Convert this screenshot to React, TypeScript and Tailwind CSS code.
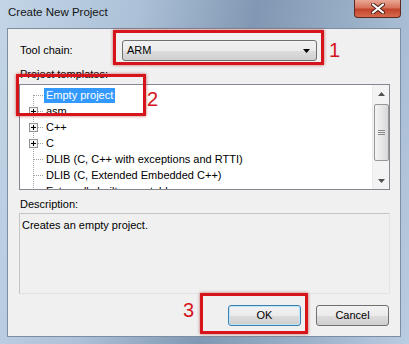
import React from "react";

const font = { fontFamily: '"Liberation Sans", Arial, sans-serif' };

function Gutter({ first, plus }: { first?: boolean; plus?: boolean }) {
  return (
    <svg width="24" height="16" className="shrink-0">
      <line x1="13.5" y1={first ? 8 : 0} x2="13.5" y2="16" stroke="#a0a0a0" strokeDasharray="1 1" />
      <line x1="14" y1="8.5" x2="24" y2="8.5" stroke="#a0a0a0" strokeDasharray="1 1" />
      {plus && (
        <g>
          <rect x="9.5" y="4.5" width="8" height="8" fill="#f4f4f4" stroke="#919191" />
          <line x1="11" y1="8.5" x2="16" y2="8.5" stroke="#000" />
          <line x1="13.5" y1="6" x2="13.5" y2="11" stroke="#000" />
        </g>
      )}
    </svg>
  );
}

function Row({ label, first, plus, selected }: { label: string; first?: boolean; plus?: boolean; selected?: boolean }) {
  return (
    <div className="flex h-[16px] items-center whitespace-nowrap">
      <Gutter first={first} plus={plus} />
      <span
        className={
          selected
            ? "bg-[#3399ff] text-white px-[2px] leading-[15px]"
            : "px-[2px] leading-[15px] text-black"
        }
      >
        {label}
      </span>
    </div>
  );
}

export default function App() {
  return (
    <div
      className="relative w-[409px] h-[344px] overflow-hidden flex flex-col pt-[28px] pl-[7px] pr-[8px] pb-[7px] bg-[linear-gradient(100deg,#c3d5e7_0%,#acc1d7_30%,#8098b3_55%,#97aec6_75%,#b9cde1_100%)] text-[11px]"
      style={font}
    >
      {/* title */}
      <div className="absolute left-[8px] top-[5px] text-[11.5px] leading-[14px] text-[#141414]">Create New Project</div>
      {/* close button */}
      <div className="absolute left-[354px] top-0 w-[47px] h-[18px] rounded-b-[4px] border border-t-0 border-[#5c2a22] bg-[linear-gradient(180deg,#e9a896_0%,#d7735c_45%,#c2432b_55%,#d66a4e_100%)] flex items-center justify-center">
        <svg width="14" height="11" viewBox="0 0 14 11">
          <path d="M2 1.5 L12 9.5 M12 1.5 L2 9.5" stroke="#4a2018" strokeWidth="4" strokeLinecap="round" />
          <path d="M2 1.5 L12 9.5 M12 1.5 L2 9.5" stroke="#ffffff" strokeWidth="2.2" strokeLinecap="round" />
        </svg>
      </div>

      {/* content */}
      <div className="flex-1 flex flex-col border border-[#7d8ea2] bg-[#f0f0f0]">
        {/* tool chain row */}
        <div className="flex items-center mt-[11px] pl-[12px] h-[21px]">
          <div className="w-[102px] text-black">Tool chain:</div>
          <div className="w-[195px] h-[21px] rounded-[3px] border border-[#707070] bg-[linear-gradient(180deg,#f2f2f2_0%,#ebebeb_50%,#dddddd_51%,#cfcfcf_100%)] flex items-center pl-[4px] pr-[6px]">
            <span className="flex-1 text-black">ARM</span>
            <svg width="7" height="4" viewBox="0 0 7 4">
              <path d="M0 0 H7 L3.5 4 Z" fill="#000" />
            </svg>
          </div>
        </div>

        <div className="mt-[7px] pl-[12px] leading-[13px] text-black">Project templates:</div>

        {/* tree */}
        <div className="mt-[3px] ml-[11px] w-[371px] h-[106px] border border-[#828790] bg-white flex overflow-hidden">
          <div className="flex-1 pt-[2px] overflow-hidden">
            <Row label="Empty project" first selected />
            <Row label="asm" plus />
            <Row label="C++" plus />
            <Row label="C" plus />
            <Row label="DLIB (C, C++ with exceptions and RTTI)" />
            <Row label="DLIB (C, Extended Embedded C++)" />
            <Row label="Externally built executable" />
          </div>
          {/* scrollbar */}
          <div className="w-[17px] h-full bg-[#f3f3f3] border-l border-[#ececec] flex flex-col items-center">
            <div className="h-[17px] w-full flex items-center justify-center">
              <svg width="7" height="4" viewBox="0 0 7 4">
                <path d="M0 4 H7 L3.5 0 Z" fill="#505050" />
              </svg>
            </div>
            <div className="mt-[2px] h-[57px] w-[15px] rounded-[2px] border border-[#979797] bg-[linear-gradient(90deg,#f3f3f3_0%,#e8e8e8_50%,#d8d8d8_100%)] flex flex-col items-center justify-center gap-[1px]">
              <div className="w-[7px] h-[1px] bg-[#8a8a8a]" />
              <div className="w-[7px] h-[1px] bg-[#8a8a8a]" />
              <div className="w-[7px] h-[1px] bg-[#8a8a8a]" />
            </div>
            <div className="flex-1" />
            <div className="h-[17px] w-full flex items-center justify-center">
              <svg width="7" height="4" viewBox="0 0 7 4">
                <path d="M0 0 H7 L3.5 4 Z" fill="#505050" />
              </svg>
            </div>
          </div>
        </div>

        <div className="mt-[8px] pl-[12px] leading-[13px] text-black">Description:</div>
        <div className="mt-[2px] ml-[11px] w-[371px] h-[81px] border border-[#c4c4c4] border-b-[#e3e3e3] border-r-[#e3e3e3] bg-[#f0f0f0] px-[2px] pt-[5px] leading-[13px] text-black">
          Creates an empty project.
        </div>

        {/* buttons */}
        <div className="mt-[11px] flex justify-end gap-[15px] pr-[11px]">
          <div className="w-[73px] h-[21px] rounded-[3px] border border-[#3c7fb1] bg-[linear-gradient(180deg,#f2f2f2_0%,#ebebeb_50%,#dddddd_51%,#cfcfcf_100%)] shadow-[inset_0_0_0_1px_#bfe5fb] flex items-center justify-center text-black">
            OK
          </div>
          <div className="w-[73px] h-[21px] rounded-[3px] border border-[#707070] bg-[linear-gradient(180deg,#f2f2f2_0%,#ebebeb_50%,#dddddd_51%,#cfcfcf_100%)] flex items-center justify-center text-black">
            Cancel
          </div>
        </div>
      </div>

      {/* annotations */}
      <div className="absolute left-[113px] top-[30px] w-[211px] h-[35px] border-[3px] border-[#d5141c] shadow-[0_0_3px_rgba(160,0,0,0.6)]" />
      <div className="absolute left-[329px] top-[40px] text-[20px] leading-[20px] text-[#d5141c]">1</div>
      <div className="absolute left-[16px] top-[74px] w-[130px] h-[42px] border-[3px] border-[#d5141c] shadow-[0_0_3px_rgba(160,0,0,0.6)]" />
      <div className="absolute left-[147px] top-[89px] text-[20px] leading-[20px] text-[#d5141c]">2</div>
      <div className="absolute left-[200px] top-[293px] w-[108px] h-[41px] border-[3px] border-[#d5141c] shadow-[0_0_3px_rgba(160,0,0,0.6)]" />
      <div className="absolute left-[183px] top-[300px] text-[20px] leading-[20px] text-[#d5141c]">3</div>
    </div>
  );
}
